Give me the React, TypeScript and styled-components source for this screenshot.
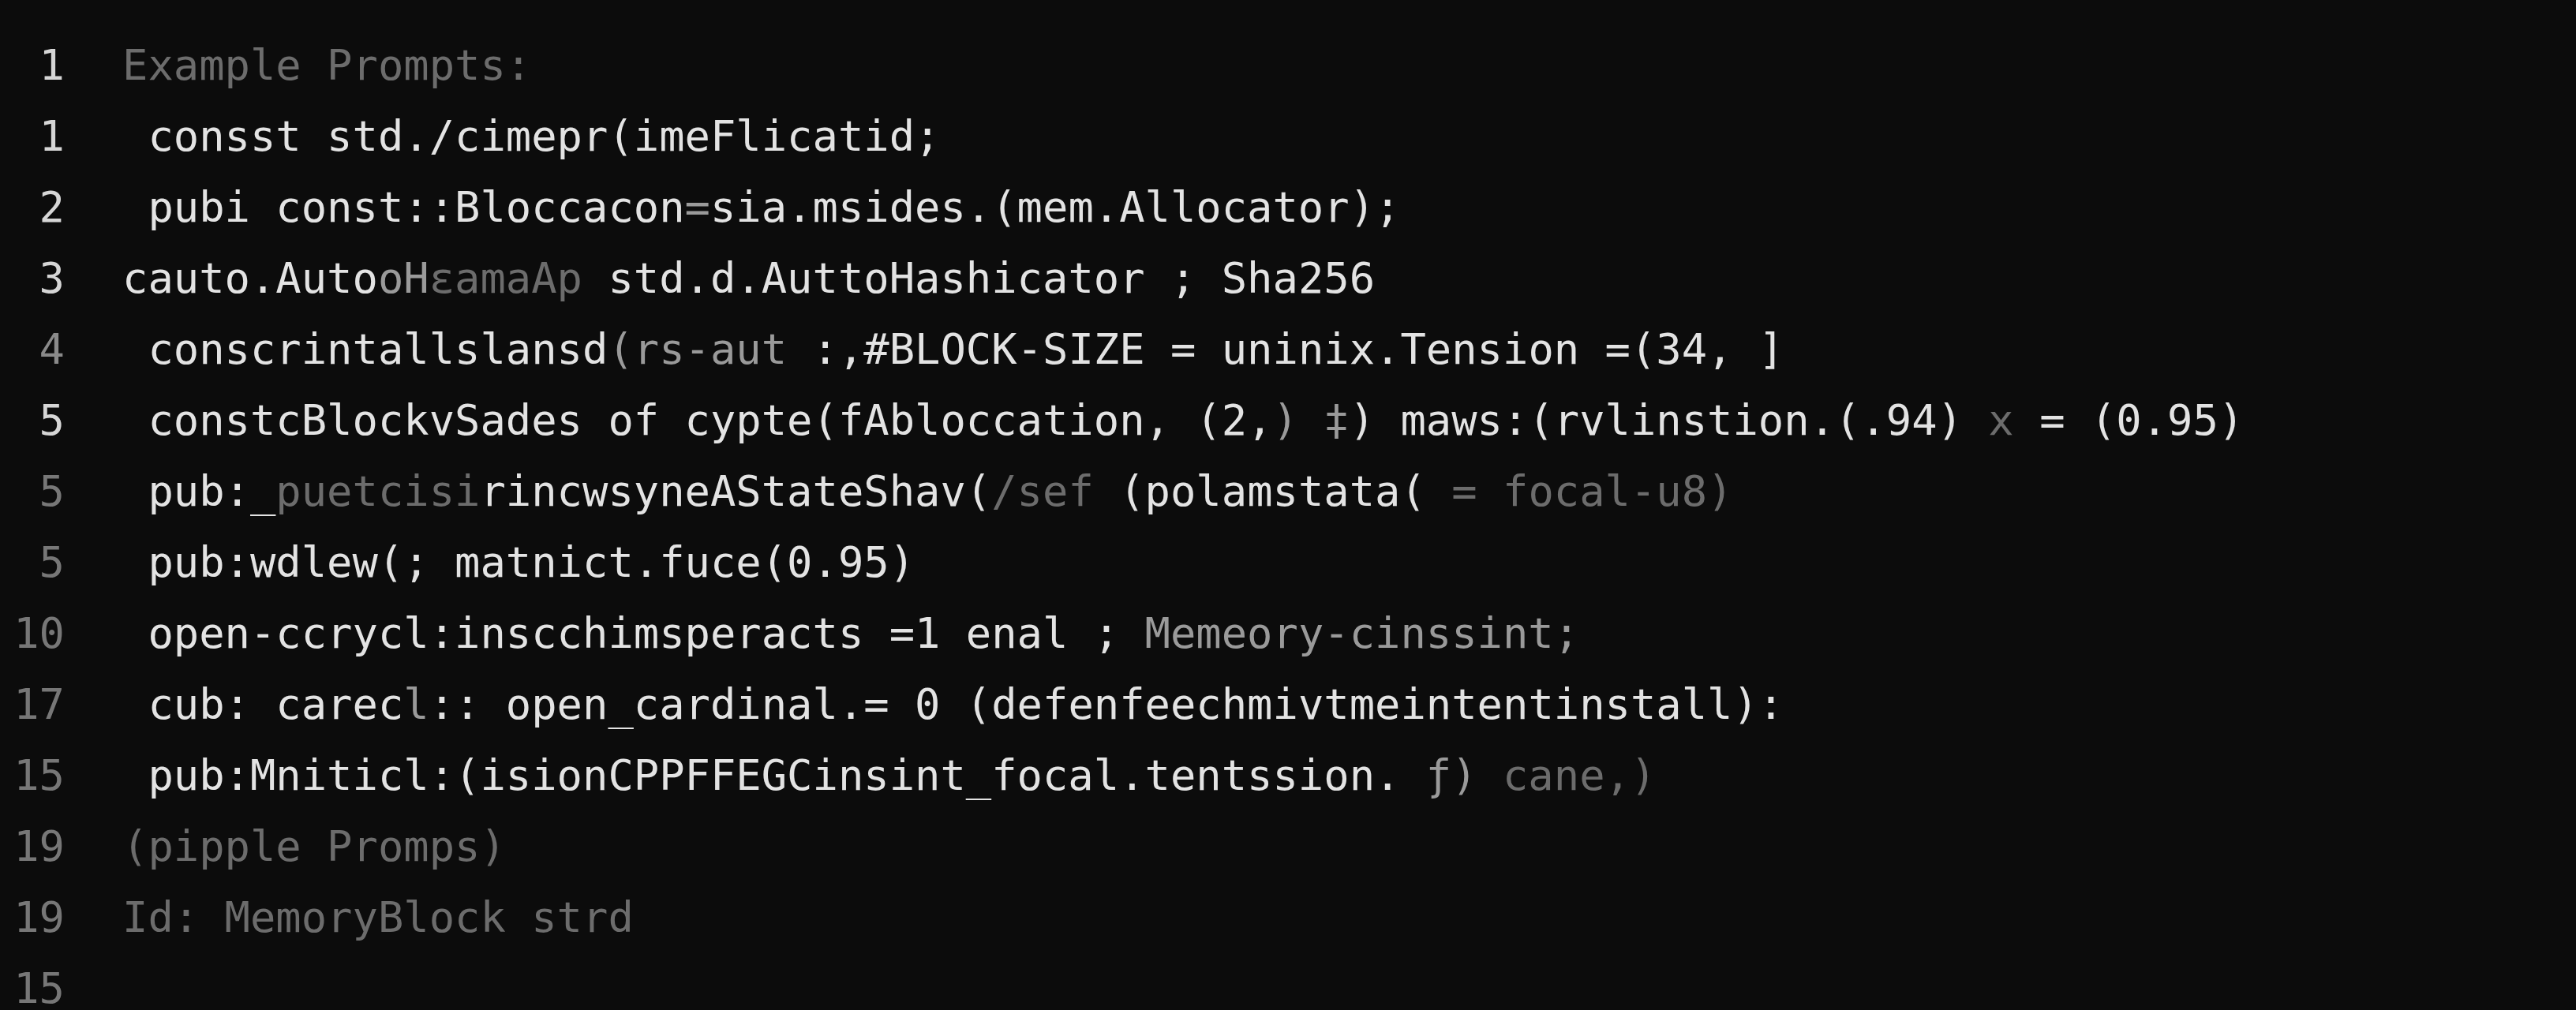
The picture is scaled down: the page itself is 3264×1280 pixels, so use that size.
import React from "react";
import styled, { createGlobalStyle } from "styled-components";

type Tone = "bright" | "mid" | "dim";
type Seg = [string, Tone];
type Line = { no: string; noTone: Tone; segs: Seg[] };

const lines: Line[] = [
  { no: "1", noTone: "bright", segs: [["Example Prompts:", "dim"]] },
  { no: "1", noTone: "bright", segs: [[" consst std./cimepr(imeFlicatid;", "bright"]] },
  {
    no: "2",
    noTone: "bright",
    segs: [
      [" pubi const::Bloccacon", "bright"],
      ["=", "mid"],
      ["sia.msides.(mem.Allocator);", "bright"],
    ],
  },
  {
    no: "3",
    noTone: "bright",
    segs: [
      ["cauto.Auto", "bright"],
      ["oH", "mid"],
      ["ɛamaAp", "dim"],
      [" std.d.AuttoHashicator ; Sha256", "bright"],
    ],
  },
  {
    no: "4",
    noTone: "mid",
    segs: [
      [" conscrintallslansd", "bright"],
      ["(rs-aut", "mid"],
      [" :,#BLOCK-SIZE = uninix.Tension =(34, ]", "bright"],
    ],
  },
  {
    no: "5",
    noTone: "bright",
    segs: [
      [" constcBlockvSades of cypte(fAbloccation, (2,", "bright"],
      [")", "mid"],
      [" ‡", "mid"],
      [") maws:(rvlinstion.(.94)", "bright"],
      [" x", "dim"],
      [" = (0.95)", "bright"],
    ],
  },
  {
    no: "5",
    noTone: "dim",
    segs: [
      [" pub:_", "bright"],
      ["puetcisi", "dim"],
      ["rincwsyneAStateShav(", "bright"],
      ["/sef", "dim"],
      [" (polamstata(", "bright"],
      [" = focal-u8)", "dim"],
    ],
  },
  { no: "5", noTone: "dim", segs: [[" pub:wdlew(; matnict.fuce(0.95)", "bright"]] },
  {
    no: "10",
    noTone: "dim",
    segs: [
      [" open-ccrycl:inscchimsperacts =1 enal ; ", "bright"],
      ["Memeory-cinssint;", "mid"],
    ],
  },
  {
    no: "17",
    noTone: "dim",
    segs: [
      [" cub: carec", "bright"],
      ["l", "mid"],
      [":: open_cardinal.= 0 (defenfeechmivtmeintentinstall):", "bright"],
    ],
  },
  {
    no: "15",
    noTone: "dim",
    segs: [
      [" pub:Mniticl:(isionCPPFFEGCinsint_focal.tentssion. ", "bright"],
      ["ƒ)", "mid"],
      [" cane,)", "dim"],
    ],
  },
  { no: "19", noTone: "dim", segs: [["(pipple Promps)", "dim"]] },
  { no: "19", noTone: "dim", segs: [["Id: MemoryBlock strd", "dim"]] },
  { no: "15", noTone: "dim", segs: [] },
];

const toneColor: Record<Tone, string> = {
  bright: "#e3e3e3",
  mid: "#9a9a9a",
  dim: "#6c6c6c",
};

const numColor: Record<Tone, string> = {
  bright: "#d6d6d6",
  mid: "#8a8a8a",
  dim: "#777777",
};

const Global = createGlobalStyle`
  html, body {
    margin: 0;
    padding: 0;
    background: #0c0c0c;
    overflow: hidden;
  }
`;

const Editor = styled.div`
  display: flex;
  flex-direction: column;
  width: 3264px;
  height: 1280px;
  box-sizing: border-box;
  padding-top: 38px;
  background: #0c0c0c;
  font-family: "DejaVu Sans Mono", "Liberation Mono", monospace;
  font-size: 53.8px;
  line-height: 90px;
  overflow: hidden;
`;

const Row = styled.div`
  display: flex;
  align-items: baseline;
  gap: 73px;
  height: 90px;
  flex-shrink: 0;
`;

const LineNo = styled.span<{ $tone: Tone }>`
  width: 82px;
  flex-shrink: 0;
  text-align: right;
  color: ${(p) => numColor[p.$tone]};
`;

const Code = styled.span`
  white-space: pre;
`;

const Token = styled.span<{ $tone: Tone }>`
  color: ${(p) => toneColor[p.$tone]};
`;

export default function App() {
  return (
    <>
      <Global />
      <Editor>
        {lines.map((line, i) => (
          <Row key={i}>
            <LineNo $tone={line.noTone}>{line.no}</LineNo>
            <Code>
              {line.segs.map(([text, tone], j) => (
                <Token key={j} $tone={tone}>
                  {text}
                </Token>
              ))}
            </Code>
          </Row>
        ))}
      </Editor>
    </>
  );
}
